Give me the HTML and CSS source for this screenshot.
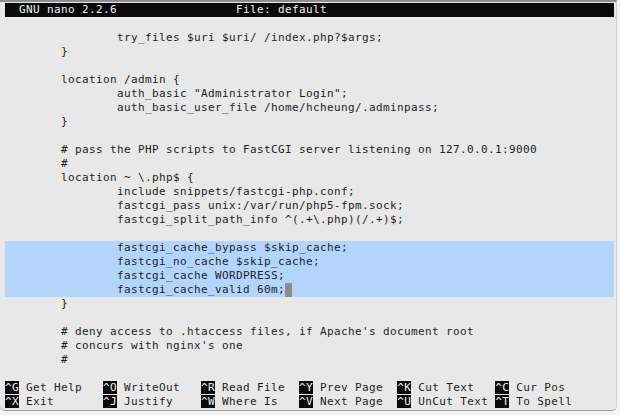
FILE: index.html
```html
<!DOCTYPE html>
<html>
<head>
<meta charset="utf-8">
<link rel="stylesheet" href="styles.css">
</head>
<body>
<div class="window">
  <div class="screen">
    <div class="row title">  GNU nano 2.2.6                 File: default</div>
    <div class="row"></div>
    <div class="row">                try_files $uri $uri/ /index.php?$args;</div>
    <div class="row">        }</div>
    <div class="row"></div>
    <div class="row">        location /admin {</div>
    <div class="row">                auth_basic "Administrator Login";</div>
    <div class="row">                auth_basic_user_file /home/hcheung/.adminpass;</div>
    <div class="row">        }</div>
    <div class="row"></div>
    <div class="row">        # pass the PHP scripts to FastCGI server listening on 127.0.0.1:9000</div>
    <div class="row">        #</div>
    <div class="row">        location ~ \.php$ {</div>
    <div class="row">                include snippets/fastcgi-php.conf;</div>
    <div class="row">                fastcgi_pass unix:/var/run/php5-fpm.sock;</div>
    <div class="row">                fastcgi_split_path_info ^(.+\.php)(/.+)$;</div>
    <div class="row"></div>
    <div class="row sel">                fastcgi_cache_bypass $skip_cache;</div>
    <div class="row sel">                fastcgi_no_cache $skip_cache;</div>
    <div class="row sel">                fastcgi_cache WORDPRESS;</div>
    <div class="row sel">                fastcgi_cache_valid 60m;<span class="cursor"> </span></div>
    <div class="row">        }</div>
    <div class="row"></div>
    <div class="row">        # deny access to .htaccess files, if Apache's document root</div>
    <div class="row">        # concurs with nginx's one</div>
    <div class="row">        #</div>
    <div class="row"></div>
    <div class="row"><span class="key">^G</span> Get Help   <span class="key">^O</span> WriteOut   <span class="key">^R</span> Read File  <span class="key">^Y</span> Prev Page  <span class="key">^K</span> Cut Text   <span class="key">^C</span> Cur Pos</div>
    <div class="row"><span class="key">^X</span> Exit       <span class="key">^J</span> Justify    <span class="key">^W</span> Where Is   <span class="key">^V</span> Next Page  <span class="key">^U</span> UnCut Text <span class="key">^T</span> To Spell</div>
  </div>
</div>
</body>
</html>
```
FILE: styles.css
```css
html, body {
  margin: 0;
  padding: 0;
  background: #f4f4f4;
}
.window {
  width: 617px;
  height: 411px;
  background: #e8e8e8;
  border-top: 2px solid #8e8e8e;
  border-bottom: 1px solid #a0a0a0;
  border-right: 1px solid #cfcfcf;
  border-radius: 0 0 5px 5px;
  padding: 1px 0 0 5px;
  box-sizing: border-box;
  overflow: hidden;
}
.screen {
  width: 609px;
  font-family: "DejaVu Sans Mono", monospace;
  font-size: 11px;
  letter-spacing: 0.378px;
  line-height: 14px;
  color: #1e1e1e;
}
.row {
  height: 14px;
  white-space: pre;
}
.title {
  background: #0a0a0a;
  color: #f2f2f2;
}
.sel {
  background: #b3d5fd;
}
.cursor {
  display: inline-block;
  width: 7px;
  height: 14px;
  vertical-align: top;
  background: #8c8c8c;
}
.key {
  background: #0a0a0a;
  color: #f2f2f2;
}
```
